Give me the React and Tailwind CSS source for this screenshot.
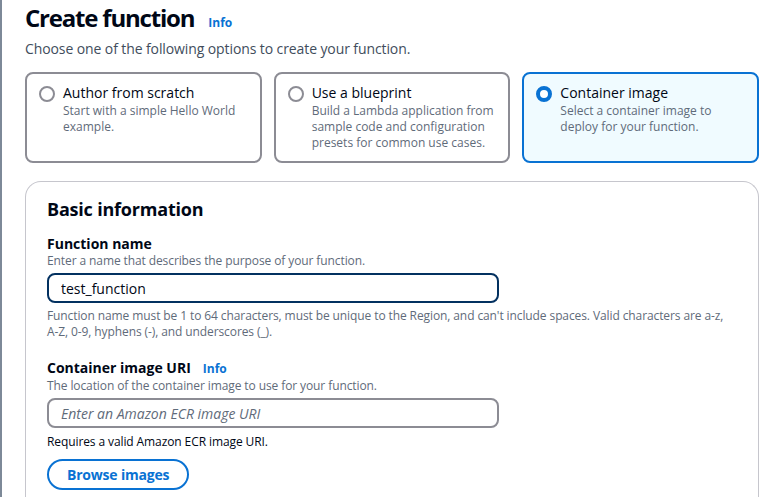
import React, { useState } from "react";

const options = [
  {
    id: "scratch",
    title: "Author from scratch",
    desc: "Start with a simple Hello World example.",
  },
  {
    id: "blueprint",
    title: "Use a blueprint",
    desc: "Build a Lambda application from sample code and configuration presets for common use cases.",
  },
  {
    id: "container",
    title: "Container image",
    desc: "Select a container image to deploy for your function.",
  },
];

function Radio({ checked }) {
  if (checked)
    return (
      <span className="mt-[3px] w-4 h-4 shrink-0 rounded-full border-[4px] border-[#0972d3] bg-white" />
    );
  return (
    <span className="mt-[3px] w-4 h-4 shrink-0 rounded-full border-2 border-[#8c8c94] bg-white" />
  );
}

export default function App() {
  const [choice, setChoice] = useState("container");
  const [name, setName] = useState("test_function");

  return (
    <div
      className="min-h-screen bg-white border-l-2 border-[#7d8998] text-[#000716] overflow-hidden"
      style={{ fontFamily: '"Open Sans", "Noto Sans", Arial, sans-serif' }}
    >
      <div className="pl-[23px] pr-[16px] pt-[2px]">
        {/* Header */}
        <div className="flex items-baseline gap-[14px]">
          <h1 className="text-[24px] leading-[32px] font-bold tracking-[-1.2px]">
            Create function
          </h1>
          <a className="text-[12px] font-bold text-[#0972d3]">Info</a>
        </div>
        <p className="mt-[5px] text-[14px] leading-[20px] text-[#414d5c] tracking-[-0.1px]">
          Choose one of the following options to create your function.
        </p>

        {/* Options */}
        <div className="mt-[13px] grid grid-cols-3 gap-[12px]">
          {options.map((o) => {
            const active = choice === o.id;
            return (
              <button
                key={o.id}
                onClick={() => setChoice(o.id)}
                className={`h-[91px] rounded-[8px] border-2 text-left flex gap-2 pl-[12px] pr-3 pt-[9px] ${
                  active
                    ? "border-[#0972d3] bg-[#f0fbff]"
                    : "border-[#8c8c94] bg-white"
                }`}
              >
                <Radio checked={active} />
                <div>
                  <div className="text-[14px] leading-[20px]">{o.title}</div>
                  <div className="text-[12px] leading-[16px] text-[#5f6b7a]">
                    {o.desc}
                  </div>
                </div>
              </button>
            );
          })}
        </div>

        {/* Basic information */}
        <div className="mt-[18px] rounded-t-[16px] border border-[#c6c6cd] border-b-0 pl-[21px] pr-5 pt-[15px] pb-6 min-h-[320px]">
          <h2 className="text-[18px] leading-[24px] font-bold tracking-[-0.2px]">
            Basic information
          </h2>

          <div className="mt-[13px]">
            <label className="block text-[14px] leading-[19px] font-bold">
              Function name
            </label>
            <p className="text-[12px] leading-[16px] text-[#5f6b7a] tracking-[-0.1px]">
              Enter a name that describes the purpose of your function.
            </p>
            <input
              value={name}
              onChange={(e) => setName(e.target.value)}
              className="mt-[4px] w-[452px] h-[30px] rounded-[8px] border-2 border-[#033160] px-[12px] text-[14px] outline-none"
            />
            <p className="mt-[5px] text-[12px] leading-[16px] text-[#5f6b7a] tracking-[-0.1px]">
              Function name must be 1 to 64 characters, must be unique to the
              Region, and can't include spaces. Valid characters are a-z,
              <br />
              A-Z, 0-9, hyphens (-), and underscores (_).
            </p>
          </div>

          <div className="mt-[18px]">
            <div className="flex items-baseline gap-[12px]">
              <label className="text-[14px] leading-[19px] font-bold">
                Container image URI
              </label>
              <a className="text-[12px] font-bold text-[#0972d3]">Info</a>
            </div>
            <p className="text-[12px] leading-[16px] text-[#5f6b7a] tracking-[-0.1px]">
              The location of the container image to use for your function.
            </p>
            <input
              placeholder="Enter an Amazon ECR image URI"
              className="mt-[4px] w-[452px] h-[30px] rounded-[8px] border-2 border-[#8c8c94] px-[12px] text-[14px] outline-none placeholder:italic placeholder:text-[#5f6b7a]"
            />
            <p className="mt-[6px] text-[12px] leading-[16px] text-[#000716] tracking-[-0.1px]">
              Requires a valid Amazon ECR image URI.
            </p>
            <button className="mt-[9px] h-[31px] px-[18px] rounded-full border-2 border-[#0972d3] text-[14px] font-bold text-[#0972d3] tracking-[-0.2px]">
              Browse images
            </button>
          </div>
        </div>
      </div>
    </div>
  );
}
